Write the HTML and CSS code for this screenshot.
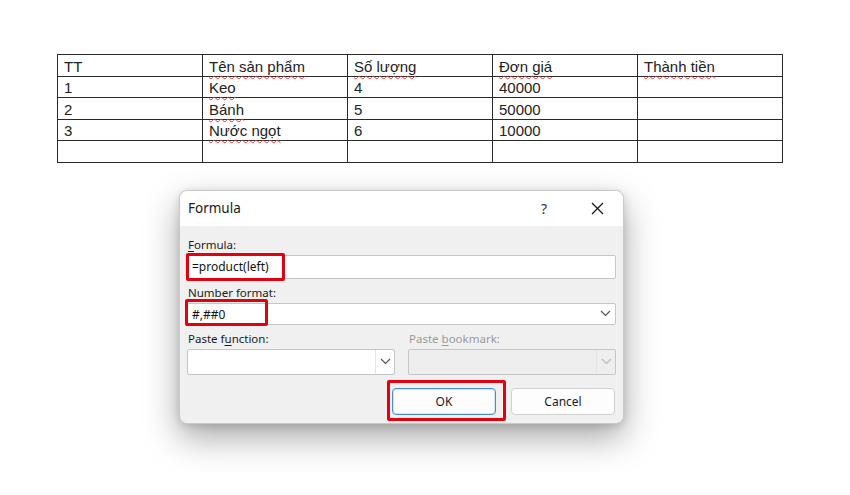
FILE: index.html
```html
<!DOCTYPE html>
<html lang="vi">
<head>
  <meta charset="UTF-8" />
  <title>Formula</title>
  <link rel="stylesheet" href="styles.css">
</head>
<body>

  <!-- Word table -->
  <table class="doc-table">
    <tr>
      <td>TT</td>
      <td><span class="sq">Tên sản phẩm</span></td>
      <td><span class="sq">Số lượng</span></td>
      <td><span class="sq">Đơn giá</span></td>
      <td><span class="sq">Thành tiền</span></td>
    </tr>
    <tr><td>1</td><td><span class="sq">Keo</span></td><td>4</td><td>40000</td><td></td></tr>
    <tr><td>2</td><td><span class="sq">Bánh</span></td><td>5</td><td>50000</td><td></td></tr>
    <tr><td>3</td><td><span class="sq">Nước ngọt</span></td><td>6</td><td>10000</td><td></td></tr>
    <tr><td></td><td></td><td></td><td></td><td></td></tr>
  </table>

  <!-- Formula dialog -->
  <div class="dialog">
    <div class="dialog-title">
      <span class="title-text">Formula</span>
      <span class="help">?</span>
      <svg class="close" width="13" height="13" viewBox="0 0 13 13">
        <path d="M1 1 L12 12 M12 1 L1 12" stroke="#1a1a1a" stroke-width="1.3" fill="none"/>
      </svg>
    </div>

    <div class="dialog-body">
      <label class="lbl"><u>F</u>ormula:</label>
      <div class="field">
        <div class="input">=product(left)</div>
        <div class="mark mark-formula"></div>
      </div>

      <label class="lbl"><u>N</u>umber format:</label>
      <div class="field">
        <div class="input combo">
          <span class="combo-text">#,##0</span>
          <span class="arrow no-sep">
            <svg width="11" height="7" viewBox="0 0 11 7"><path d="M1 1 L5.5 5.5 L10 1" stroke="#555" stroke-width="1.2" fill="none"/></svg>
          </span>
        </div>
        <div class="mark mark-format"></div>
      </div>

      <div class="two-col">
        <div class="col">
          <label class="lbl">Paste f<u>u</u>nction:</label>
          <div class="input combo tall">
            <span class="combo-text"></span>
            <span class="arrow">
              <svg width="11" height="7" viewBox="0 0 11 7"><path d="M1 1 L5.5 5.5 L10 1" stroke="#555" stroke-width="1.2" fill="none"/></svg>
            </span>
          </div>
        </div>
        <div class="col">
          <label class="lbl disabled">Paste <u>b</u>ookmark:</label>
          <div class="input combo tall off">
            <span class="combo-text"></span>
            <span class="arrow">
              <svg width="11" height="7" viewBox="0 0 11 7"><path d="M1 1 L5.5 5.5 L10 1" stroke="#bbb" stroke-width="1.2" fill="none"/></svg>
            </span>
          </div>
        </div>
      </div>

      <div class="buttons">
        <div class="btn-wrap">
          <button class="btn primary">OK</button>
          <div class="mark mark-ok"></div>
        </div>
        <button class="btn">Cancel</button>
      </div>
    </div>
  </div>

</body>
</html>
```

FILE: styles.css
```css
* {
  box-sizing: border-box;
}

body {
  margin: 0;
  padding-bottom: 60px;
  background-color: #fff;
  font-family: "Noto Sans", "Open Sans", sans-serif;
  color: #1a1a1a;
}

/* table */

.doc-table {
  margin: 54px 0 0 57px;
  border-collapse: collapse;
  font-family: "Liberation Sans", Arial, sans-serif;
  font-size: 15px;
  color: #222;
}

.doc-table td {
  width: 145px;
  height: 21.5px;
  padding: 2px 6px 0;
  border: 1.4px solid #2a2a2a;
  vertical-align: middle;
  line-height: 17px;
}

.sq {
  text-decoration: underline wavy #d83a3a;
  text-decoration-thickness: 1px;
  text-underline-offset: 3px;
}

/* dialog */

.dialog {
  width: 445px;
  margin: 27px 0 0 179px;
  background-color: #f0f0f0;
  border: 1px solid #c9c9c9;
  border-radius: 8px;
  box-shadow: 0 14px 34px rgba(0,0,0,0.34), 0 2px 8px rgba(0,0,0,0.14);
}

.dialog-title {
  display: flex;
  align-items: center;
  height: 35px;
  padding: 0 19px 0 8px;
  background-color: #fff;
  border-radius: 8px 8px 0 0;
}

.title-text {
  flex: 1;
  font-size: 13.5px;
  color: #1a1a1a;
}

.help {
  font-size: 14px;
  margin-right: 44px;
  color: #333;
}

.close {
  display: block;
}

.dialog-body {
  padding: 11px 7px 8px 7px;
}

.lbl {
  display: block;
  font-size: 11.5px;
  line-height: 15px;
  margin: 0 0 3px 1px;
  color: #1a1a1a;
}

.lbl u {
  text-underline-offset: 2px;
}

.lbl.disabled {
  color: #9a9a9a;
}

.field {
  position: relative;
  margin-bottom: 6px;
}

.input {
  height: 24px;
  background-color: #fff;
  border: 1px solid #c6c6c6;
  border-radius: 2px;
  font-size: 12px;
  line-height: 22px;
  padding-left: 4px;
  color: #111;
}

.combo {
  display: flex;
  height: 22px;
  padding-left: 0;
}

.combo-text {
  flex: 1;
  padding-left: 4px;
}

.arrow {
  display: flex;
  align-items: center;
  justify-content: center;
  width: 19px;
  border-left: 1px solid #e4e4e4;
}

.arrow.no-sep {
  border-left: none;
}

.combo.tall {
  height: 26px;
}

.combo.off {
  background-color: #eeeeee;
}

.two-col {
  display: flex;
  gap: 13px;
}

.col {
  flex: 1;
}

.buttons {
  display: flex;
  justify-content: flex-end;
  gap: 15px;
  margin-top: 13px;
  padding-right: 1px;
}

.btn-wrap {
  position: relative;
}

.btn {
  display: block;
  width: 104px;
  height: 27px;
  font-family: "Noto Sans", "Open Sans", sans-serif;
  font-size: 12px;
  color: #1a1a1a;
  background-color: #fdfdfd;
  border: 1px solid #d0d0d0;
  border-radius: 4px;
}

.btn.primary {
  border: 1px solid #4a8fd6;
  box-shadow: inset 0 0 0 1px #cfe2f6;
}

/* red highlight boxes drawn over the dialog */

.mark {
  position: absolute;
  border: 3px solid #e3000f;
  border-radius: 2px;
}

.mark-formula {
  left: -1px;
  top: -2px;
  width: 99px;
  height: 28px;
}

.mark-format {
  left: -2px;
  top: -4px;
  width: 83px;
  height: 27px;
}

.mark-ok {
  left: -5px;
  top: -8px;
  width: 119px;
  height: 41px;
}
```
